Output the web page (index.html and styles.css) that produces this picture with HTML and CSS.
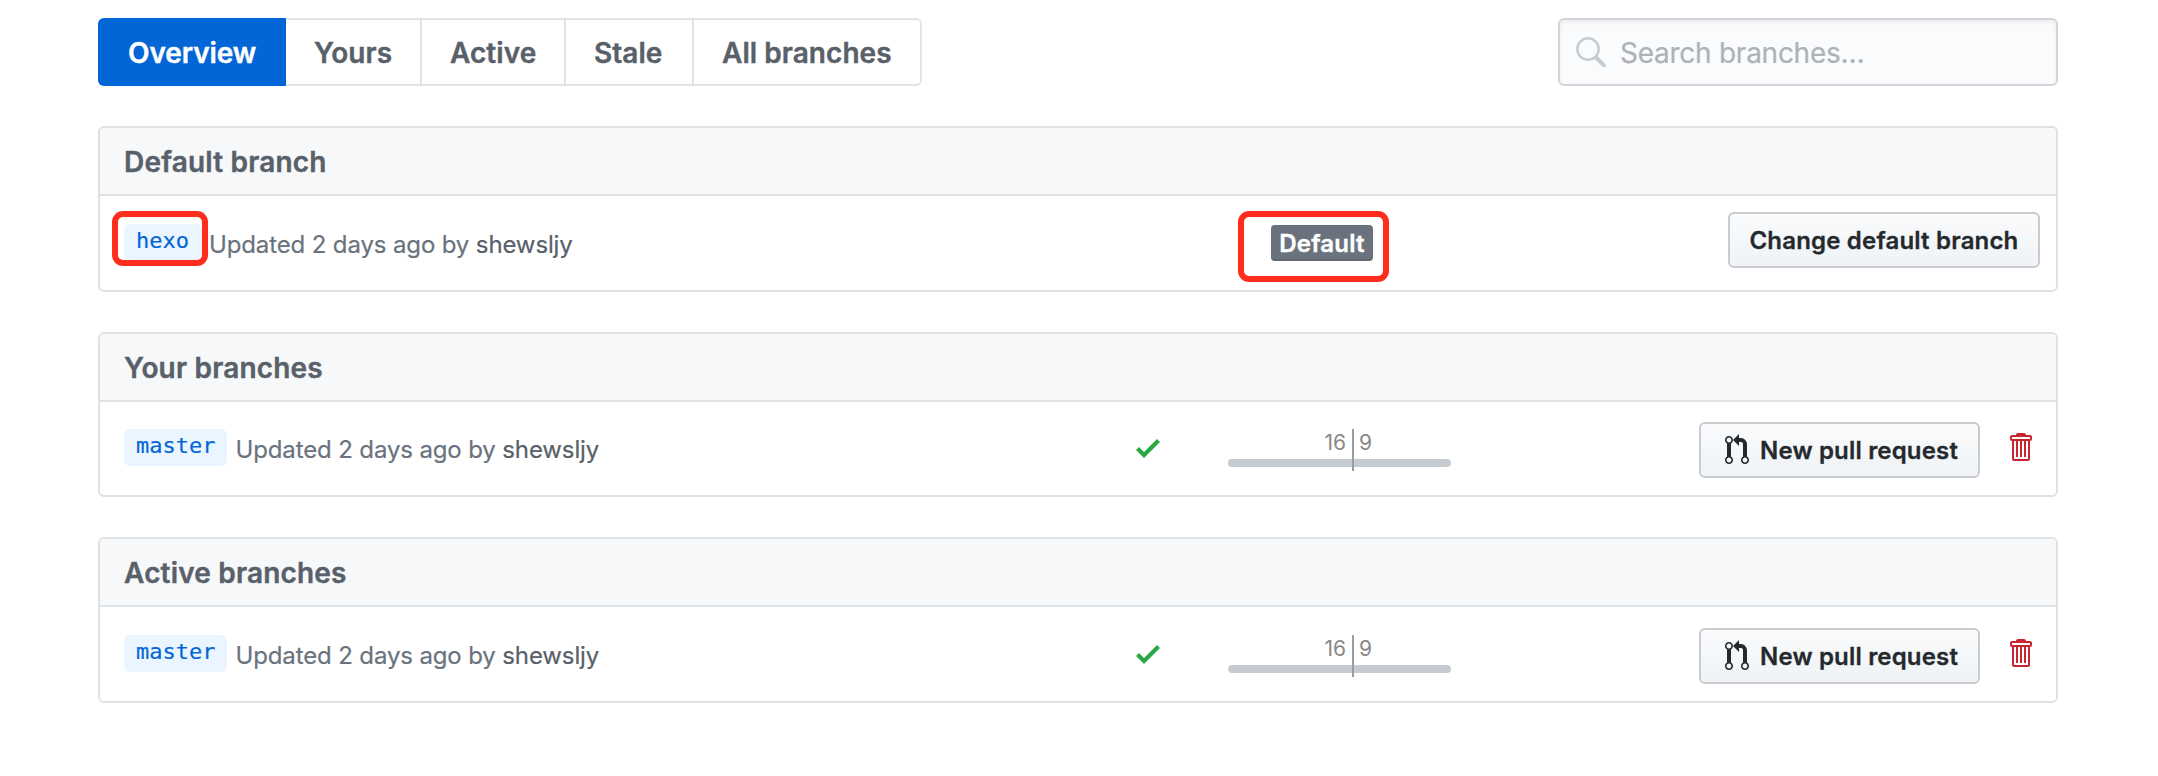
FILE: index.html
```html
<!DOCTYPE html>
<html lang="en">
<head>
<meta charset="utf-8">
<title>Branches</title>
<link rel="stylesheet" href="styles.css">
</head>
<body>
<svg class="sprite" aria-hidden="true">
  <symbol id="check" viewBox="0 0 12 16"><path d="M12 5l-8 8-4-4 1.5-1.5L4 10l6.5-6.5z"/></symbol>
  <symbol id="pull" viewBox="0 0 12 16"><path fill-rule="evenodd" d="M11 11.28V5c-.03-.78-.34-1.47-.94-2.06C9.46 2.35 8.78 2.03 8 2H7V0L4 3l3 3V4h1c.27.02.48.11.69.31.21.2.3.42.31.69v6.28A1.993 1.993 0 0 0 10 15a1.993 1.993 0 0 0 1-3.72zm-1 2.92c-.66 0-1.2-.55-1.2-1.2 0-.65.55-1.2 1.2-1.2.65 0 1.2.55 1.2 1.2 0 .65-.55 1.2-1.2 1.2zM4 3c0-1.11-.89-2-2-2a1.993 1.993 0 0 0-1 3.72v6.56A1.993 1.993 0 0 0 2 15a1.993 1.993 0 0 0 1-3.72V4.72c.59-.34 1-.98 1-1.72zm-.8 10c0 .66-.55 1.2-1.2 1.2-.65 0-1.2-.55-1.2-1.2 0-.65.55-1.2 1.2-1.2.65 0 1.2.55 1.2 1.2zM2 4.2C1.34 4.2.8 3.65.8 3c0-.65.55-1.2 1.2-1.2.65 0 1.2.55 1.2 1.2 0 .65-.55 1.2-1.2 1.2z"/></symbol>
  <symbol id="trash" viewBox="0 0 12 16"><path fill-rule="evenodd" d="M11 2H9c0-.55-.45-1-1-1H5c-.55 0-1 .45-1 1H2c-.55 0-1 .45-1 1v1c0 .55.45 1 1 1v9c0 .55.45 1 1 1h7c.55 0 1-.45 1-1V5c.55 0 1-.45 1-1V3c0-.55-.45-1-1-1zm-1 12H3V5h1v8h1V5h1v8h1V5h1v8h1V5h1v9zm1-10H2V3h9v1z"/></symbol>
</svg>
<main class="page">
  <div class="toolbar">
    <nav class="tabs">
      <a class="tab tab-selected"><span>Overview</span></a>
      <a class="tab tab-yours"><span>Yours</span></a>
      <a class="tab tab-active"><span>Active</span></a>
      <a class="tab tab-stale"><span>Stale</span></a>
      <a class="tab tab-all"><span>All branches</span></a>
    </nav>
    <div class="search">
      <svg class="search-icon" viewBox="0 0 30 30"><circle cx="12" cy="12" r="10.7" fill="none" stroke="#c6cbd1" stroke-width="2.4"/><path d="M20 20.5l7.8 7.7" stroke="#c6cbd1" stroke-width="4" stroke-linecap="round"/></svg>
      <span class="placeholder">Search branches…</span>
    </div>
  </div>

  <section class="card">
    <h2 class="card-title"><span>Default branch</span></h2>
    <div class="row row-default">
      <div class="info">
        <span class="marked"><code class="branch">hexo</code></span>
        <span class="meta">Updated 2 days ago by <a class="author">shewsljy</a></span>
      </div>
      <div class="state"><div class="marked-state"><span class="label"><span>Default</span></span></div></div>
      <a class="btn btn-change"><span>Change default branch</span></a>
    </div>
  </section>

  <section class="card card-short">
    <h2 class="card-title"><span>Your branches</span></h2>
    <div class="row">
      <div class="info">
        <code class="branch">master</code>
        <span class="meta">Updated 2 days ago by <a class="author">shewsljy</a></span>
      </div>
      <svg class="check"><use href="#check"/></svg>
      <div class="meter"><span class="behind">16</span><span class="ahead">9</span></div>
      <a class="btn btn-pull"><svg class="icon"><use href="#pull"/></svg><span>New pull request</span></a>
      <svg class="trash"><use href="#trash"/></svg>
    </div>
  </section>

  <section class="card">
    <h2 class="card-title"><span>Active branches</span></h2>
    <div class="row row-active">
      <div class="info">
        <code class="branch">master</code>
        <span class="meta">Updated 2 days ago by <a class="author">shewsljy</a></span>
      </div>
      <svg class="check"><use href="#check"/></svg>
      <div class="meter"><span class="behind">16</span><span class="ahead">9</span></div>
      <a class="btn btn-pull"><svg class="icon"><use href="#pull"/></svg><span>New pull request</span></a>
      <svg class="trash"><use href="#trash"/></svg>
    </div>
  </section>
</main>
</body>
</html>
```
FILE: styles.css
```css
* { box-sizing: border-box; }
body { margin: 0; background: #fff; font-family: Inter, "Liberation Sans", sans-serif; color: #24292e; }
.sprite { position: absolute; width: 0; height: 0; }
svg { display: block; flex: none; fill: currentColor; }
.page { padding: 18px 100px 0 98px; }
.toolbar { display: flex; justify-content: space-between; height: 68px; margin-bottom: 40px; }
.tabs { display: flex; font-size: 28px; font-weight: 600; letter-spacing: .05px; color: #586069; white-space: nowrap; }
.tab { display: flex; align-items: center; padding: 2px 0 0 28px; border: 2px solid #e1e4e8; border-left: 0; -webkit-text-stroke: .4px; }
.tab-selected { width: 188px; padding-left: 30px; background: #0366d6; border-color: #0366d6; color: #fff; border-radius: 6px 0 0 6px; letter-spacing: -.1px; }
.tab-yours { width: 136px; }
.tab-active { width: 144px; }
.tab-stale { width: 128px; }
.tab-all { width: 228px; border-radius: 0 6px 6px 0; }
.search { display: flex; align-items: center; width: 500px; padding-left: 16px; border: 2px solid #d1d5da; border-radius: 6px; background: #fafbfc; box-shadow: inset 0 2px 4px rgba(27,31,35,.075); }
.search-icon { width: 30px; height: 30px; margin-bottom: 1px; }
.placeholder { margin: 2px 0 0 14px; font-size: 28px; letter-spacing: -.26px; color: #adb2b7; white-space: nowrap; -webkit-text-stroke: .2px; }
.card { height: 166px; margin-bottom: 40px; border: 2px solid #dfe2e5; border-radius: 6px; overflow: hidden; }
.card-short { height: 165px; }
.card-title { display: flex; align-items: center; height: 68px; margin: 0; padding: 2px 0 0 24px; background: #f6f8fa; border-bottom: 2px solid #dfe2e5; font-size: 28px; font-weight: 600; letter-spacing: .18px; color: #586069; -webkit-text-stroke: .4px; }
.row { display: flex; align-items: flex-start; padding: 20px 0 0 24px; }
.info { display: flex; align-items: flex-start; width: 1012px; padding-top: 7px; }
.branch { height: 37px; padding: 0 12px; border-radius: 6px; background: #eaf5ff; color: #0366d6; font: 22px/34px "DejaVu Sans Mono", monospace; -webkit-text-stroke: .2px; }
.meta { margin: 5px 0 0 8px; font-size: 24px; line-height: 32px; letter-spacing: -.13px; color: #6a737d; white-space: pre; -webkit-text-stroke: .2px; }
.author { color: #586069; }
.check { width: 24px; height: 32px; margin-top: 10px; color: #28a745; }
.meter { position: relative; display: flex; width: 223px; height: 42px; margin: 7px 0 0 68px; font-size: 21px; line-height: 28px; color: #888; }
.meter::before { content: ""; position: absolute; left: 0; top: 30px; width: 223px; height: 8px; border-radius: 4px; background: #c6cbd1; }
.meter::after { content: ""; position: absolute; left: 124px; top: 0; width: 2px; height: 42px; background: #959da5; }
.behind { width: 118px; text-align: right; }
.ahead { margin-left: 13px; }
.btn { display: flex; align-items: center; height: 56px; border: 2px solid #c8ccd0; border-radius: 6px; background: linear-gradient(#fafbfc, #eff3f6); font-size: 24px; font-weight: 600; letter-spacing: .18px; white-space: nowrap; -webkit-text-stroke: .3px; }
.btn-pull { width: 281px; margin-left: 248px; padding-left: 24px; }
.icon { width: 24px; height: 32px; margin-right: 11px; }
.trash { width: 24px; height: 32px; margin: 9px 0 0 28px; color: #cb2431; }
.row-active { padding-top: 21px; }
.row-default { padding: 15px 0 0 12px; }
.row-default .info { width: 1126px; padding: 0; }
.marked { padding: 7px 0 0 6px; width: 96px; height: 55px; border: 6px solid #ff2d1e; border-radius: 11px; }
.marked .branch { display: block; height: 36px; width: 78px; line-height: 33px; }
.row-default .meta { margin: 18px 0 0 1px; }
.marked-state { width: 151px; height: 71px; padding: 8px 0 0 27px; border: 6px solid #ff2d1e; border-radius: 11px; }
.label { display: flex; align-items: center; justify-content: center; width: 102px; height: 36px; border-radius: 4px; background: #6a737d; box-shadow: inset 0 -2px 0 rgba(27,31,35,.12); color: #fff; font-size: 24px; font-weight: 600; letter-spacing: .2px; -webkit-text-stroke: .4px; }
.btn-change { width: 312px; margin: 1px 0 0 339px; justify-content: center; }
```
